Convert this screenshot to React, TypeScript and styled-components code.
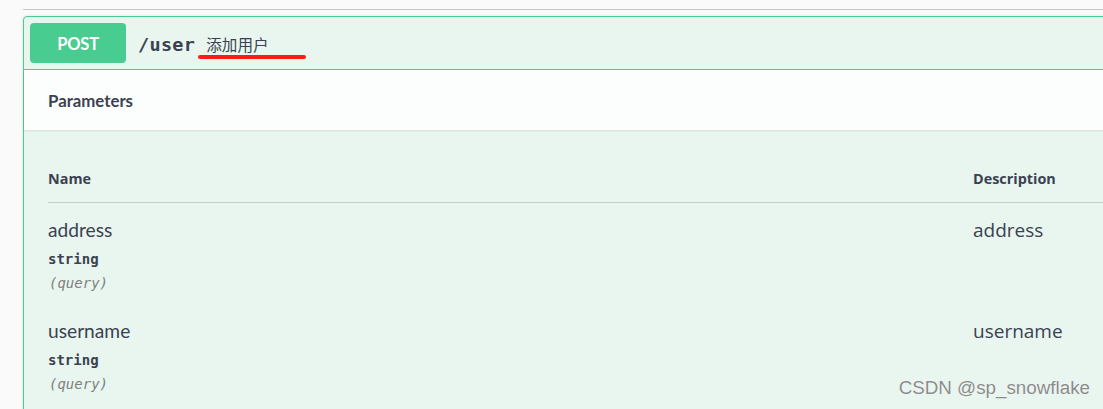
import React from "react";
import styled, { createGlobalStyle } from "styled-components";

const Global = createGlobalStyle`
  html, body { margin: 0; padding: 0; background: #fafafa; overflow: hidden; }
  body { width: 1103px; height: 409px; font-family: "Open Sans", sans-serif; color: #3b4151; }
  * { box-sizing: border-box; }
`;

const Page = styled.div`
  position: relative;
  width: 1103px;
  height: 409px;
  overflow: hidden;
  padding-left: 23px;
`;

const TagRule = styled.div`
  height: 10px;
  width: 1200px;
  border-bottom: 1px solid #c6c7c9;
  margin-bottom: 6px;
`;

const Card = styled.div`
  width: 1200px;
  border: 1px solid #49cc90;
  border-radius: 4px;
  background: #e8f6ef;
  box-shadow: 0 0 3px rgba(0, 0, 0, 0.12);
`;

const Summary = styled.div`
  position: relative;
  display: flex;
  align-items: center;
  padding: 6px;
  border-bottom: 1px solid #49cc90;
`;

const Method = styled.div`
  width: 96px;
  height: 40px;
  border-radius: 4px;
  background: #49cc90;
  color: #fff;
  display: flex;
  align-items: center;
  justify-content: center;
  font-family: "Lato", sans-serif;
  font-weight: 700;
  font-size: 16.5px;
  letter-spacing: -0.2px;
  padding-top: 1px;
`;

const Path = styled.span`
  font-family: "DejaVu Sans Mono", monospace;
  font-weight: 600;
  font-size: 18.5px;
  color: #3b4151;
  padding: 0 11px 0 12px;
  letter-spacing: 0.3px;
  margin-top: 2px;
`;

const Desc = styled.span`
  font-family: "Noto Sans CJK SC", sans-serif;
  font-size: 15.6px;
  color: #3b4151;
  margin-top: 1px;
`;

const RedMark = styled.div`
  position: absolute;
  left: 174px;
  top: 38px;
  width: 108px;
  height: 4px;
  border-radius: 2px;
  background: #ff1a14;
`;

const SectionHeader = styled.div`
  height: 60px;
  display: flex;
  align-items: center;
  padding: 0 24px;
  background: rgba(255, 255, 255, 0.85);
  box-shadow: 0 1px 2px rgba(0, 0, 0, 0.1);
`;

const SectionTitle = styled.h4`
  margin: 0;
  font-family: "Lato", sans-serif;
  font-weight: 700;
  font-size: 16.8px;
  color: #3b4151;
`;

const TableWrap = styled.div`
  padding: 24px 0 40px 24px;
`;

const Grid = styled.div`
  display: grid;
  grid-template-columns: 925px 1fr;
`;

const HeadRow = styled(Grid)`
  border-bottom: 1px solid #c5d0cc;
  padding: 14px 0 12px;
`;

const HeadCell = styled.div`
  font-family: "Open Sans", sans-serif;
  font-weight: 700;
  font-size: 14.4px;
  line-height: 22px;
  color: #3b4151;
`;

const Row = styled(Grid)`
  padding: 13px 0 12px;
`;

const NameCell = styled.div`
  display: flex;
  flex-direction: column;
`;

const ParamName = styled.div`
  font-family: "Lato", sans-serif;
  font-size: 19.2px;
  line-height: 28px;
  color: #3b4151;
`;

const ParamType = styled.div`
  font-family: "DejaVu Sans Mono", monospace;
  font-weight: 600;
  font-size: 14px;
  line-height: 18px;
  padding: 6px 0;
  color: #3b4151;
`;

const ParamIn = styled.div`
  font-family: "DejaVu Sans Mono", monospace;
  font-style: italic;
  font-size: 14px;
  line-height: 18px;
  color: #808080;
  padding-left: 1px;
`;

const DescCell = styled.div`
  font-family: "Open Sans", sans-serif;
  font-size: 19px;
  line-height: 28px;
  color: #3b4151;
`;

const Watermark = styled.div`
  position: absolute;
  right: 13px;
  bottom: 10px;
  font-family: "Liberation Sans", Arial, sans-serif;
  font-size: 18.8px;
  color: #8c8c8c;
  text-shadow: 0 0 1px #fff;
`;

const params = [
  { name: "address", type: "string", loc: "(query)", desc: "address" },
  { name: "username", type: "string", loc: "(query)", desc: "username" },
];

export default function App() {
  return (
    <>
      <Global />
      <Page>
        <TagRule />
        <Card>
          <Summary>
            <Method>POST</Method>
            <Path>/user</Path>
            <Desc>添加用户</Desc>
            <RedMark />
          </Summary>
          <SectionHeader>
            <SectionTitle>Parameters</SectionTitle>
          </SectionHeader>
          <TableWrap>
            <HeadRow>
              <HeadCell>Name</HeadCell>
              <HeadCell>Description</HeadCell>
            </HeadRow>
            {params.map((p) => (
              <Row key={p.name}>
                <NameCell>
                  <ParamName>{p.name}</ParamName>
                  <ParamType>{p.type}</ParamType>
                  <ParamIn>{p.loc}</ParamIn>
                </NameCell>
                <DescCell>{p.desc}</DescCell>
              </Row>
            ))}
          </TableWrap>
        </Card>
        <Watermark>CSDN @sp_snowflake</Watermark>
      </Page>
    </>
  );
}
